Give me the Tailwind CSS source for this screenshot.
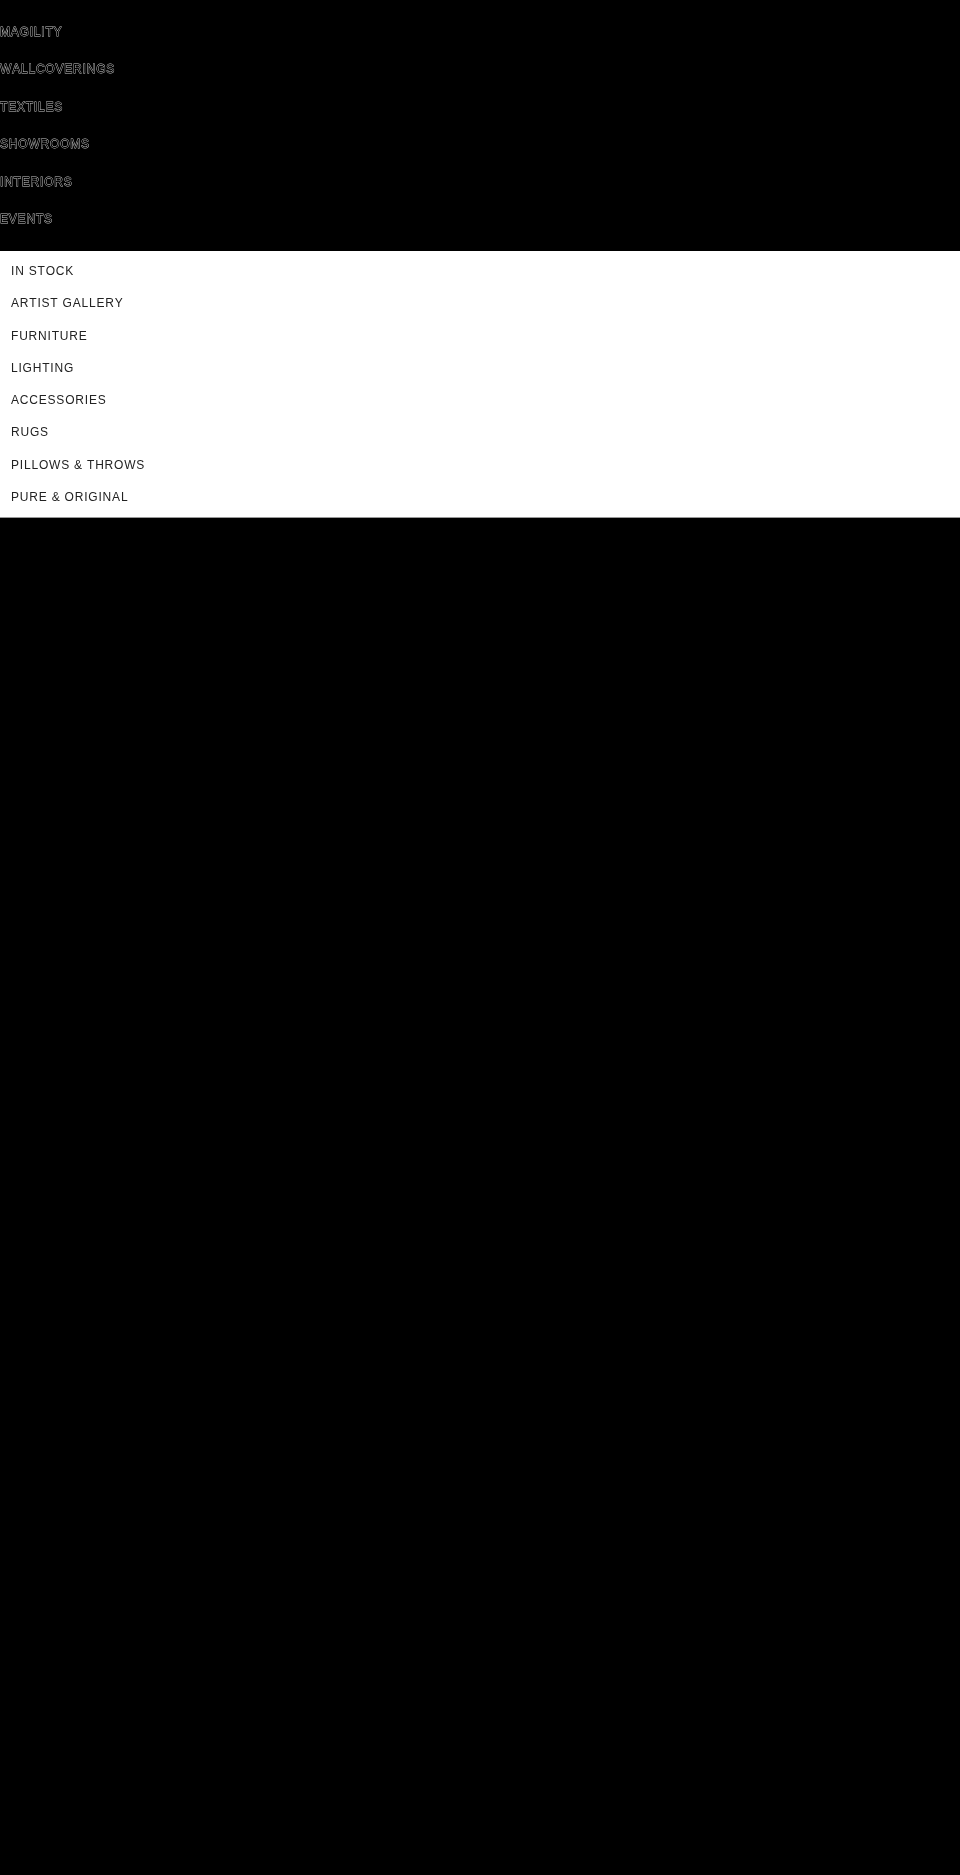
<!DOCTYPE html>
<html><head><meta charset="utf-8"><script src="https://cdn.jsdelivr.net/npm/@tailwindcss/browser@4"></script></head>
<body class="bg-black font-['Liberation_Sans',sans-serif] antialiased [font-kerning:none]">
<div class="w-[960px] h-[1875px] bg-black">
<nav class="h-[251px] pt-[13.5px] flex flex-col text-[12px] leading-[37.5px] tracking-[0.8px] text-black [-webkit-text-stroke:0.8px_#ccc] [paint-order:stroke_fill] [will-change:transform]">
<a>MAGILITY</a><a>WALLCOVERINGS</a><a>TEXTILES</a><a>SHOWROOMS</a><a>INTERIORS</a><a>EVENTS</a>
</nav>
<div class="h-[266.5px] bg-white border-b border-[#999]">
<ul class="pt-[4px] pl-[11px] text-[12px] leading-[32.3px] tracking-[0.8px] text-[#222] [will-change:transform]">
<li>IN STOCK</li><li>ARTIST GALLERY</li><li>FURNITURE</li><li>LIGHTING</li><li>ACCESSORIES</li><li>RUGS</li><li>PILLOWS &amp; THROWS</li><li>PURE &amp; ORIGINAL</li>
</ul>
</div>
</div>
</body></html>
